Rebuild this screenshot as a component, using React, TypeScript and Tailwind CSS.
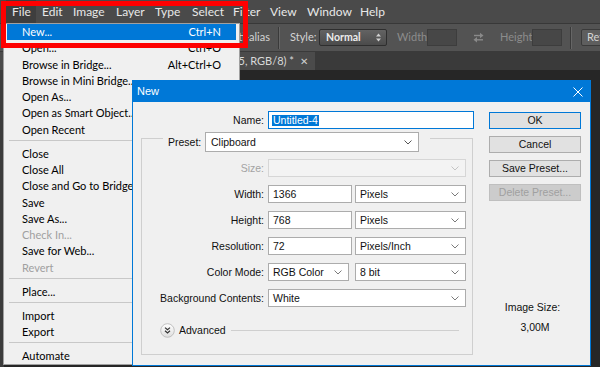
import React from "react";

type MenuEntry =
  | { sep: true }
  | { sep?: false; t: string; s?: string; hi?: boolean; dis?: boolean; sub?: boolean };

const fileMenu: MenuEntry[] = [
  { t: "New...", s: "Ctrl+N", hi: true },
  { t: "Open...", s: "Ctrl+O" },
  { t: "Browse in Bridge...", s: "Alt+Ctrl+O" },
  { t: "Browse in Mini Bridge..." },
  { t: "Open As..." },
  { t: "Open as Smart Object..." },
  { t: "Open Recent", sub: true },
  { sep: true },
  { t: "Close" },
  { t: "Close All" },
  { t: "Close and Go to Bridge..." },
  { t: "Save" },
  { t: "Save As..." },
  { t: "Check In...", dis: true },
  { t: "Save for Web..." },
  { t: "Revert", dis: true },
  { sep: true },
  { t: "Place..." },
  { sep: true },
  { t: "Import", sub: true },
  { t: "Export", sub: true },
  { sep: true },
  { t: "Automate", sub: true },
];

const topMenu = [
  { t: "File", c: "w-[30px] bg-[#3e3e3e]" },
  { t: "Edit", c: "w-[31px]" },
  { t: "Image", c: "w-[43px]" },
  { t: "Layer", c: "w-[39px]" },
  { t: "Type", c: "w-[37px]" },
  { t: "Select", c: "w-[41px]" },
  { t: "Filter", c: "w-[37px]" },
  { t: "View", c: "w-[37px]" },
  { t: "Window", c: "w-[53px]" },
  { t: "Help", c: "w-[40px]" },
];

function Chevron({ color = "#7a7a7a" }: { color?: string }) {
  return (
    <svg width="8" height="5" viewBox="0 0 8 5" className="shrink-0">
      <polyline points="0.5,0.5 4,4 7.5,0.5" fill="none" stroke={color} strokeWidth="1" />
    </svg>
  );
}

function Sel({ text, className }: { text: string; className: string }) {
  return (
    <div
      className={
        "flex items-center justify-between h-[18px] border border-[#acacac] bg-white pl-[4px] pr-[6px] " +
        className
      }
    >
      <span className="leading-none">{text}</span>
      <Chevron />
    </div>
  );
}

function Inp({ text, className }: { text: string; className: string }) {
  return (
    <div className={"flex items-center h-[18px] border border-[#acacac] bg-white pl-[4px] " + className}>
      <span className="leading-none">{text}</span>
    </div>
  );
}

function Row({
  label,
  children,
  className = "",
  labelClass = "",
}: {
  label: string;
  children: React.ReactNode;
  className?: string;
  labelClass?: string;
}) {
  return (
    <div className={"flex items-center h-[18px] " + className}>
      <div className={"w-[126px] pr-[4px] text-right leading-none " + labelClass}>{label}</div>
      {children}
    </div>
  );
}

export default function App() {
  return (
    <div className="relative w-[600px] h-[367px] overflow-hidden bg-[#262626] flex flex-col font-['Lato',sans-serif]">
      {/* Top menu bar */}
      <div className="h-[24px] shrink-0 bg-[#4a4a4a] border-b border-[#383838] flex items-stretch pl-[6px] text-[12px] text-[#e8e8e8]">
        {topMenu.map((m) => (
          <div key={m.t} className={"flex items-center pl-[6px] " + m.c}>
            {m.t}
          </div>
        ))}
      </div>

      {/* Options bar */}
      <div className="h-[28px] shrink-0 bg-[#535353] border-b border-[#3a3a3a] flex items-center text-[11px]">
        <div className="w-[222px] shrink-0" />
        <div className="w-[48px] shrink-0 text-right text-[#d4d4d4]">Anti-alias</div>
        <div className="ml-[8px] w-[2px] h-[22px] border-l border-[#3a3a3a] border-r border-r-[#666666]" />
        <div className="ml-[10px] w-[29px] shrink-0 text-[#d4d4d4]">Style:</div>
        <div className="w-[68px] h-[17px] shrink-0 rounded-[2px] border border-[#2e2e2e] bg-gradient-to-b from-[#636363] to-[#4b4b4b] flex items-center justify-between pl-[6px] pr-[5px] text-[#ececec] font-bold text-[10.5px]">
          <span>Normal</span>
          <svg width="5" height="9" viewBox="0 0 5 9">
            <polygon points="0,3.5 2.5,0.5 5,3.5" fill="#d0d0d0" />
            <polygon points="0,5.5 2.5,8.5 5,5.5" fill="#d0d0d0" />
          </svg>
        </div>
        <div className="ml-[10px] w-[30px] shrink-0 text-[#8c8c8c]">Width:</div>
        <div className="w-[30px] h-[17px] shrink-0 bg-[#474747] border border-[#3d3d3d]" />
        <svg className="ml-[16px] shrink-0" width="11" height="11" viewBox="0 0 11 11">
          <path d="M1 3.5 H7.5" stroke="#8a8a8a" strokeWidth="1.4" />
          <polygon points="7,0.8 10.5,3.5 7,6.2" fill="#8a8a8a" />
          <path d="M10 7.8 H3.5" stroke="#8a8a8a" strokeWidth="1.4" />
          <polygon points="4,5.1 0.5,7.8 4,10.5" fill="#8a8a8a" />
        </svg>
        <div className="ml-[16px] w-[32px] shrink-0 text-[#8c8c8c]">Height:</div>
        <div className="w-[30px] h-[17px] shrink-0 bg-[#474747] border border-[#3d3d3d]" />
        <div className="ml-[8px] w-[2px] h-[22px] border-l border-[#3a3a3a] border-r border-r-[#666666]" />
        <div className="ml-[9px] w-[60px] h-[17px] shrink-0 rounded-[2px] border border-[#3a3a3a] bg-[#5e5e5e] pl-[5px] text-[#d4d4d4] flex items-center whitespace-nowrap overflow-hidden">
          Refine Edge...
        </div>
      </div>

      {/* Tab bar */}
      <div className="h-[18px] shrink-0 bg-[#3a3a3a] flex">
        <div className="w-[315px] bg-[#4b4b4b] flex items-center justify-end text-[11px] text-[#d8d8d8] whitespace-nowrap overflow-hidden">
          <span>Untitled-1 @ 100% (Layer 5, RGB/8) *</span>
          <span className="ml-[6px] mr-[7px] text-[10px] text-[#cfcfcf]">✕</span>
        </div>
      </div>

      {/* Workspace */}
      <div className="flex-1 flex">
        <div className="w-[4px] bg-[#3c3c3c]" />
        <div className="flex-1 bg-[#262626]" />
      </div>

      {/* File menu dropdown */}
      <div className="absolute left-[3px] top-[23px] w-[237px] bg-[#f0f0f0] border border-[#a0a0a0] px-[3px] text-[11px] text-[#000]">
        {fileMenu.map((m, i) =>
          m.sep ? (
            <div key={i} className="h-[7.7px] pt-[2px] pl-[2px] pr-[2px]">
              <div className="h-px bg-[#c8c8c8]" />
            </div>
          ) : (
            <div
              key={i}
              className={
                "h-[16.3px] flex items-center justify-between pl-[15px] pr-[15px] whitespace-nowrap " +
                (m.hi ? "bg-[#0078d7] text-white " : "") +
                (m.dis ? "text-[#a0a0a0]" : "")
              }
            >
              <span>{m.t}</span>
              {m.s ? <span>{m.s}</span> : null}
            </div>
          )
        )}
      </div>

      {/* Red highlight frame */}
      <div className="absolute left-[1px] top-[1px] w-[247px] h-[47px] border-[5px] border-[#fe0000]" />

      {/* New dialog */}
      <div className="absolute left-[132px] top-[80px] w-[459px] h-[286px] border border-[#0078d7] bg-[#f0f0f0] flex flex-col font-['Liberation_Sans',Arial,sans-serif] text-[10.5px] text-[#111]">
        <div className="h-[21px] shrink-0 bg-[#0078d7] flex items-center justify-between pl-[4px] pr-[7px] text-white text-[11px]">
          <span>New</span>
          <svg width="10" height="10" viewBox="0 0 10 10">
            <path d="M0.5 0.5 L9.5 9.5 M9.5 0.5 L0.5 9.5" stroke="#ffffff" strokeWidth="1" />
          </svg>
        </div>

        <div className="flex-1 flex">
          {/* left column */}
          <div className="w-[341px] pl-[8px] pt-[9px] flex flex-col">
            <div className="flex items-center h-[18px]">
              <div className="w-[127px] pr-[4px] text-right leading-none">Name:</div>
              <div className="w-[206px] h-[18px] border border-[#0078d7] bg-white flex items-center pl-[3px]">
                <span className="bg-[#0078d7] text-white leading-[11px] px-[1px]">Untitled-4</span>
              </div>
            </div>

            {/* group box */}
            <div className="mt-[3px] w-[332px] flex flex-col">
              <div className="flex h-[20px]">
                <div className="w-[22px] h-[14px] mt-[6px] border-t border-l border-[#cfcfcf]" />
                <div className="w-[42px] pl-[5px] flex items-center leading-none">Preset:</div>
                <div className="w-[214px] h-[20px] border border-[#acacac] bg-white flex items-center justify-between pl-[5px] pr-[6px]">
                  <span className="leading-none">Clipboard</span>
                  <Chevron color="#555" />
                </div>
                <div className="ml-[11px] flex-1 h-[14px] mt-[6px] border-t border-r border-[#cfcfcf]" />
              </div>
              <div className="border-l border-r border-b border-[#cfcfcf] flex flex-col pb-[16px]">
                <Row label="Size:" className="mt-[7px]" labelClass="text-[#a3a3a3]">
                  <div className="w-[198px] h-[18px] border border-[#d6d6d6] bg-[#f3f3f3] flex items-center justify-end pr-[6px]">
                    <Chevron color="#c4c4c4" />
                  </div>
                </Row>
                <Row label="Width:" className="mt-[8px]">
                  <Inp text="1366" className="w-[84px]" />
                  <Sel text="Pixels" className="ml-[3px] w-[111px]" />
                </Row>
                <Row label="Height:" className="mt-[8px]">
                  <Inp text="768" className="w-[84px]" />
                  <Sel text="Pixels" className="ml-[3px] w-[111px]" />
                </Row>
                <Row label="Resolution:" className="mt-[8px]">
                  <Inp text="72" className="w-[84px]" />
                  <Sel text="Pixels/Inch" className="ml-[3px] w-[111px]" />
                </Row>
                <Row label="Color Mode:" className="mt-[8px]">
                  <Sel text="RGB Color" className="w-[81px]" />
                  <Sel text="8 bit" className="ml-[6px] w-[111px]" />
                </Row>
                <Row label="Background Contents:" className="mt-[8px]">
                  <Sel text="White" className="w-[198px]" />
                </Row>
                <div className="mt-[16px] h-[15px] flex items-center pl-[18px] pr-[13px]">
                  <svg width="15" height="15" viewBox="0 0 15 15" className="shrink-0">
                    <defs>
                      <linearGradient id="advg" x1="0" y1="0" x2="0" y2="1">
                        <stop offset="0" stopColor="#ffffff" />
                        <stop offset="1" stopColor="#dedede" />
                      </linearGradient>
                    </defs>
                    <circle cx="7.5" cy="7.5" r="6.8" fill="url(#advg)" stroke="#b4b4b4" strokeWidth="0.8" />
                    <polyline points="5,4.6 7.5,6.8 10,4.6" fill="none" stroke="#333" strokeWidth="1.2" />
                    <polyline points="5,7.8 7.5,10 10,7.8" fill="none" stroke="#333" strokeWidth="1.2" />
                  </svg>
                  <span className="ml-[4px] leading-none">Advanced</span>
                  <div className="ml-[5px] flex-1 h-px bg-[#cfcfcf]" />
                </div>
              </div>
            </div>
          </div>

          {/* right column */}
          <div className="ml-[15px] w-[92px] pt-[10px] flex flex-col">
            <div className="h-[17px] border border-[#0078d7] bg-[#e1e1e1] flex items-center justify-center">OK</div>
            <div className="mt-[7px] h-[17px] border border-[#adadad] bg-[#e1e1e1] flex items-center justify-center">Cancel</div>
            <div className="mt-[7px] h-[17px] border border-[#adadad] bg-[#e1e1e1] flex items-center justify-center">Save Preset...</div>
            <div className="mt-[7px] h-[17px] border border-[#bfbfbf] bg-[#cccccc] text-[#a0a0a0] flex items-center justify-center">Delete Preset...</div>
            <div className="mt-[99px] h-[14px] leading-[14px] text-center pr-[5px]">Image Size:</div>
            <div className="mt-[6px] h-[14px] leading-[14px] text-center">3,00M</div>
          </div>
        </div>
      </div>
    </div>
  );
}
